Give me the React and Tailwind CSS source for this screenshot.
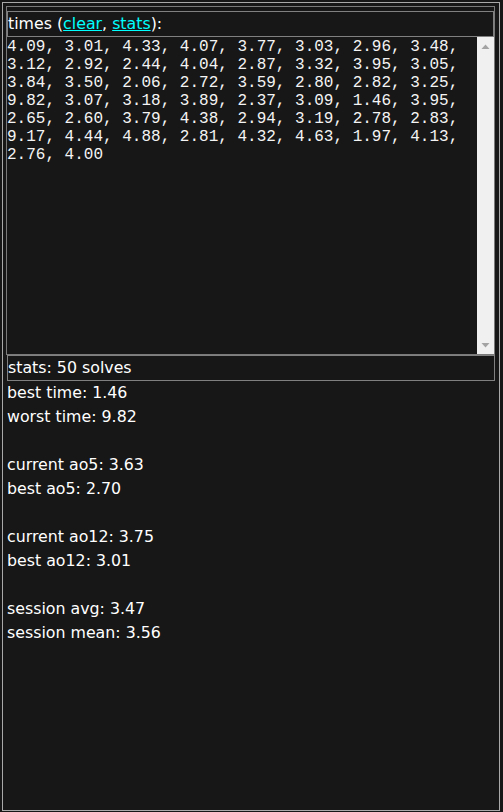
import React from "react";

const timeLines = [
  "4.09, 3.01, 4.33, 4.07, 3.77, 3.03, 2.96, 3.48,",
  "3.12, 2.92, 2.44, 4.04, 2.87, 3.32, 3.95, 3.05,",
  "3.84, 3.50, 2.06, 2.72, 3.59, 2.80, 2.82, 3.25,",
  "9.82, 3.07, 3.18, 3.89, 2.37, 3.09, 1.46, 3.95,",
  "2.65, 2.60, 3.79, 4.38, 2.94, 3.19, 2.78, 2.83,",
  "9.17, 4.44, 4.88, 2.81, 4.32, 4.63, 1.97, 4.13,",
  "2.76, 4.00",
];

const statLines = [
  "best time: 1.46",
  "worst time: 9.82",
  "",
  "current ao5: 3.63",
  "best ao5: 2.70",
  "",
  "current ao12: 3.75",
  "best ao12: 3.01",
  "",
  "session avg: 3.47",
  "session mean: 3.56",
];

function Arrow({ up }) {
  return (
    <svg width="9" height="5" viewBox="0 0 9 5" className="block">
      {up ? (
        <polygon points="0.5,5 8.5,5 4.5,0.5" fill="#a3a3a3" />
      ) : (
        <polygon points="0.5,0 8.5,0 4.5,4.5" fill="#a3a3a3" />
      )}
    </svg>
  );
}

export default function App() {
  return (
    <div
      className="min-h-[812px] bg-[#171717] pl-[2px] pt-[2px] text-white"
      style={{ fontFamily: '"DejaVu Sans", Tahoma, sans-serif' }}
    >
      <div className="box-border h-[809px] w-[498px] border border-[#a9a9a9] p-[3px]">
        {/* times panel */}
        <div className="box-border flex h-[349px] w-[489px] flex-col border border-[#7a7a7a] pt-[4px]">
          <div className="box-border h-[26px] w-[487px] border border-[#808080] text-[15.8px] leading-[24px]">
            times (
            <a href="#" className="text-[#00ffff] underline">
              clear
            </a>
            ,{" "}
            <a href="#" className="text-[#00ffff] underline">
              stats
            </a>
            ):
          </div>
          <div className="flex min-h-0 flex-1">
            <div
              className="flex-1 whitespace-pre pt-[1px] text-[16px] leading-[18px] text-[#f4f4f4]"
              style={{ fontFamily: '"Liberation Mono", "Courier New", monospace' }}
            >
              {timeLines.map((l, i) => (
                <div key={i}>{l}</div>
              ))}
            </div>
            <div className="flex w-[17px] flex-col items-center justify-between bg-[#f0f0f0] pb-[6px] pt-[7px]">
              <Arrow up />
              <Arrow />
            </div>
          </div>
        </div>

        {/* stats */}
        <div className="ml-[1px] box-border h-[26px] w-[488px] border border-[#808080] text-[15.8px] leading-[24px]">
          stats: 50 solves
        </div>
        <div className="ml-[1px] text-[15.8px] leading-[24px]">
          {statLines.map((l, i) => (
            <div key={i} className="h-[24px]">
              {l}
            </div>
          ))}
        </div>
      </div>
    </div>
  );
}
